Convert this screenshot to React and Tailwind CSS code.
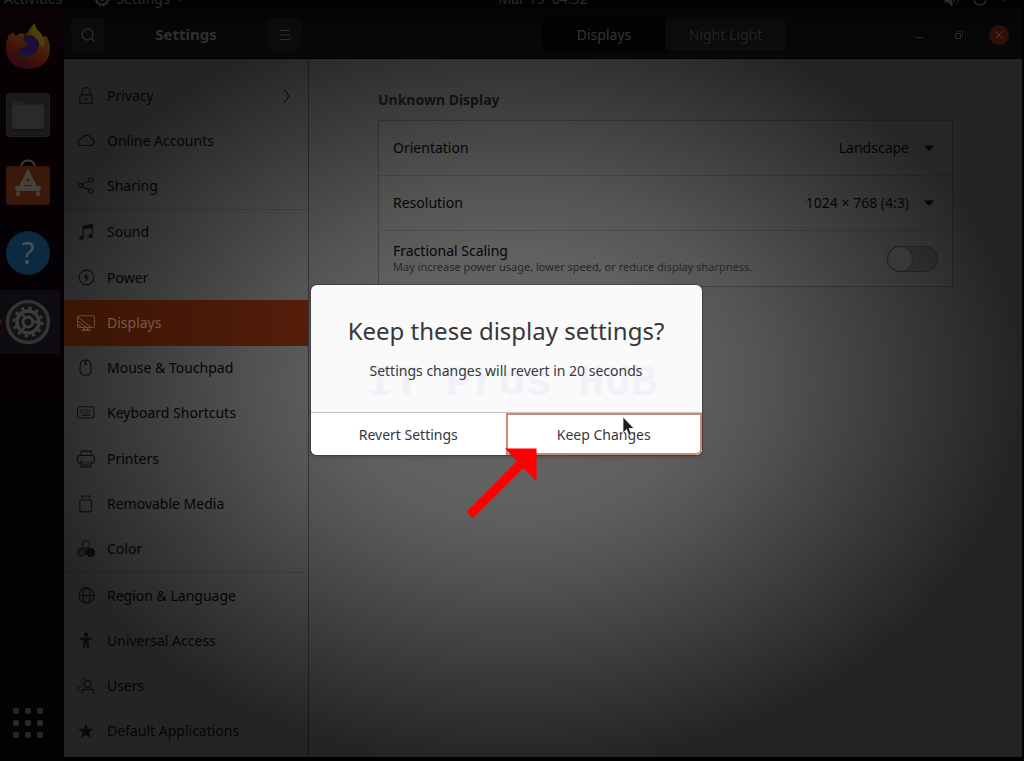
import React from "react";

const line = {
  width: 18,
  height: 18,
  viewBox: "0 0 16 16",
  fill: "none",
  stroke: "currentColor",
  strokeWidth: 0.9,
  "aria-hidden": true,
  className: "shrink-0 opacity-80",
};

const icons = {
  privacy: (
    <svg {...line}>
      <rect x="2.5" y="7" width="11" height="7.5" rx="0.5" />
      <path d="M4.5 7V4a3.5 3.5 0 0 1 7 0v3" />
      <circle cx="8" cy="10.800" r="1.1" fill="currentColor" stroke="none" />
    </svg>
  ),
  cloud: (
    <svg {...line}>
      <path d="M3.6 12h8.9a3 3 0 0 0 .4-5.9A4.6 4.6 0 0 0 4.4 5.500a3.3 3.3 0 0 0-.8 6.5z" />
    </svg>
  ),
  share: (
    <svg {...line}>
      <circle cx="3" cy="7.500" r="1.9" />
      <circle cx="12.3" cy="2.900" r="2" />
      <circle cx="12.3" cy="12.200" r="2" />
      <path d="M4.7 6.700l5.800-2.900M4.700 8.400l5.800 2.900" />
    </svg>
  ),
  sound: (
    <svg {...line}>
      <path d="M5.5 13V3l8-1.5v10" />
      <path d="M5.5 3l8-1.5v2.2l-8 1.5z" fill="currentColor" />
      <ellipse cx="3.9" cy="13.2" rx="2" ry="1.7" fill="currentColor" stroke="none" />
      <ellipse cx="11.9" cy="11.8" rx="2" ry="1.7" fill="currentColor" stroke="none" />
    </svg>
  ),
  power: (
    <svg {...line}>
      <circle cx="8.5" cy="7.500" r="6.5" />
      <path d="M9 3.2L6 8.1h2.1l-.4 3.8 3-5H8.7z" fill="currentColor" stroke="none" />
    </svg>
  ),
  displays: (
    <svg {...line}>
      <rect x="0.5" y="1.500" width="15" height="10.500" rx="1.4" />
      <path d="M1 3l11 8.500M1 6.500l7 5M1 9.500l3 2" />
      <path d="M6.5 12v2M9.5 12v2M4 14.5h8" strokeWidth="1.4" />
    </svg>
  ),
  mouse: (
    <svg {...line}>
      <path d="M2.9 5Q3 1 7.5 1T12.3 5l.3 5Q12.4 14.500 7.6 14.500T2.6 10z" />
      <path d="M7.6 1.500v4" strokeWidth="1.6" />
    </svg>
  ),
  keyboard: (
    <svg {...line}>
      <rect x="0.5" y="2.500" width="14.5" height="10" rx="1.4" />
      <path d="M3 5.500h9.6M3 7.700h9.6" strokeDasharray="1.6 .9" />
      <path d="M4 10h7.6" />
    </svg>
  ),
  printer: (
    <svg {...line}>
      <path d="M3.5 4.5v-3.500h9v3.500M3.5 11.5H2Q.5 11.5.5 10V7Q.5 4.8 2.6 4.8h10.8Q15.5 4.8 15.5 7v3q0 1.500-1.500 1.500h-1.500" />
      <path d="M3.500 9.500v5.500h9V9.500M5.500 10.500v1.500M8 10.500v1.500M10.500 10.500v1.500M5 13.300h6" />
    </svg>
  ),
  media: (
    <svg {...line}>
      <rect x="2.500" y="4.500" width="10.500" height="10.500" rx="2" />
      <path d="M4.500 3V.8h6.500V3" />
    </svg>
  ),
  color: (
    <svg {...line}>
      <circle cx="8" cy="4" r="3.300" />
      <circle cx="4" cy="11" r="3.500" fill="currentColor" fillOpacity="0.35" />
      <circle cx="12" cy="11" r="3.700" fill="currentColor" />
    </svg>
  ),
  globe: (
    <svg {...line}>
      <circle cx="8.500" cy="7.500" r="6.800" />
      <ellipse cx="8.500" cy="7.500" rx="3.300" ry="6.800" />
      <path d="M1.700 7.500h13.600" />
    </svg>
  ),
  access: (
    <svg {...line}>
      <circle cx="8" cy="2.500" r="2" fill="currentColor" stroke="none" />
      <path
        d="M2.500 5h11v1.500L10 7l.7 7.500H9L8.400 10h-.8L7 14.500H5.300L6 7l-3.500-.500z"
        fill="currentColor"
        stroke="none"
      />
    </svg>
  ),
  users: (
    <svg {...line}>
      <circle cx="9.500" cy="6" r="3" />
      <path d="M4 14.500q.300-3.500 3-3.500h5q2.700 0 3 3.500" />
      <path d="M7.500 1.200Q4.200.800 4 4q0 1.700 1 2.800M.5 12q.3-3 3-3.500" strokeDasharray="1.500 .8" />
    </svg>
  ),
  star: (
    <svg {...line}>
      <path d="M8 1l1.800 5h5.200l-4.200 3.200 1.600 5.300L8 11.300l-4.400 3.200 1.600-5.300L1 6h5.200z" fill="currentColor" stroke="none" />
    </svg>
  ),
};

const groups = [
  [
    ["Privacy", "privacy"],
    ["Online Accounts", "cloud"],
    ["Sharing", "share"],
  ],
  [
    ["Sound", "sound"],
    ["Power", "power"],
    ["Displays", "displays"],
    ["Mouse & Touchpad", "mouse"],
    ["Keyboard Shortcuts", "keyboard"],
    ["Printers", "printer"],
    ["Removable Media", "media"],
    ["Color", "color"],
  ],
  [
    ["Region & Language", "globe"],
    ["Universal Access", "access"],
    ["Users", "users"],
    ["Default Applications", "star"],
  ],
];

function TopBar() {
  return (
    <div className="relative flex h-[9px] shrink-0 items-end justify-between overflow-hidden bg-[#020202] text-sm leading-5 text-[#2b2b2b]">
      <div className="flex items-end gap-8 pl-1">
        <span>Activities</span>
        <span className="flex items-center gap-1.5">
          <svg width="16" height="16" viewBox="0 0 16 16" fill="none" stroke="currentColor" aria-hidden="true">
            <circle cx="8" cy="8" r="5.500" strokeWidth="2" />
            <circle cx="8" cy="8" r="7" strokeWidth="1.500" strokeDasharray="2 2" />
            <circle cx="8" cy="8" r="2" />
          </svg>
          Settings <span className="text-[8px]">▼</span>
        </span>
      </div>
      <span className="absolute inset-x-0 bottom-0 pl-[62px] text-center">Mar 15&nbsp; 04:52</span>
      <div className="flex items-center gap-3 pr-4">
        <svg width="16" height="16" viewBox="0 0 16 16" fill="none" stroke="currentColor" aria-hidden="true">
          <path d="M1 5h3l4-4v14l-4-4H1z" fill="currentColor" />
          <path d="M10 5q2 3 0 6M12.500 3q3.500 5 0 10" />
        </svg>
        <svg width="16" height="16" viewBox="0 0 16 16" fill="none" stroke="currentColor" strokeWidth="1.500" aria-hidden="true">
          <circle cx="8" cy="8" r="6" />
          <path d="M8 0v6" />
        </svg>
        <span className="text-[8px]">▼</span>
      </div>
    </div>
  );
}

function Firefox() {
  return (
    <svg width="46" height="48" viewBox="0 0 46 48" className="opacity-75" aria-hidden="true">
      <defs>
        <linearGradient id="fox" x1="0.75" y1="0" x2="0.3" y2="1">
          <stop offset="0" stopColor="#5f560f" />
          <stop offset="0.4" stopColor="#5e300a" />
          <stop offset="0.75" stopColor="#4e140f" />
          <stop offset="1" stopColor="#3d091d" />
        </linearGradient>
      </defs>
      <path
        d="M7 10q2 1 4 4 3-3 6-3l3 2q3-2 4-5 2-4 6-7 0 5 4 8 3 3 4 6l3-1q4 6 4 12 0 20-22 21Q2 46 1 27 1 19 3 16l1-4 2 1z"
        fill="url(#fox)"
      />
      <path d="M19 14q5-2 9 0l5 4q2 4 0 9-3 7-10 7-8 0-9-8 2 1 4 0l6-4-5-2q-1-3 0-6z" fill="#261346" />
      <path d="M14 26q5 6 12 2 3 4-1 7-8 2-12-4z" fill="#1a1d55" opacity="0.6" />
      <path d="M30 2q-5 5-3 11 6 3 8 10 4 4 5-2-1-7-6-11-4-3-4-8z" fill="#665d12" opacity="0.8" />
    </svg>
  );
}

function Dock() {
  const item = "flex h-[64px] w-[60px] items-center justify-center rounded-r pr-1";
  return (
    <nav aria-label="Dock" className="flex w-[64px] shrink-0 flex-col justify-between bg-linear-to-b from-[#090103] via-[#050105] to-[#020104]">
      <div className="flex flex-col gap-[5px] pt-[5px]">
        <button aria-label="Firefox" className={item}>
          <Firefox />
        </button>
        <button aria-label="Files" className={item}>
          <svg width="44" height="44" viewBox="0 0 44 44" aria-hidden="true">
            <rect width="44" height="44" rx="4" fill="#1b1a1a" />
            <rect x="0.500" y="0.500" width="43" height="43" rx="4" fill="none" stroke="#232222" />
            <path d="M6 11q0-3 3-3h8q2 0 3 3h15q3 0 3 3v4H6z" fill="#232321" />
            <rect x="6" y="12" width="32" height="24" rx="3" fill="#2a2a28" />
            <path d="M7 37h30" stroke="#101010" />
          </svg>
        </button>
        <button aria-label="Ubuntu Software" className={item}>
          <svg width="44" height="46" viewBox="0 0 44 46" className="mb-1" aria-hidden="true">
            <path d="M15 9Q15 1.500 22 1.500T29 9" fill="none" stroke="#3b3835" strokeWidth="2" />
            <rect y="7" width="44" height="39" rx="4" fill="#38190b" />
            <path d="M14 30l8-16 8 16M15 24h14" fill="none" stroke="#47413c" strokeWidth="4" />
            <rect x="9" y="27" width="26" height="5" rx="2" fill="#47413c" />
            <path d="M13 33l-2 4M31 33l2 4" stroke="#47413c" strokeWidth="4" />
          </svg>
        </button>
        <button aria-label="Help" className={item}>
          <span className="flex h-[44px] w-[44px] items-center justify-center rounded-full bg-[#0b2a3f] font-['Noto_Sans',sans-serif] text-[30px] leading-none text-[#43525a]">
            ?
          </span>
        </button>
        <button aria-label="Settings" className={item + " relative bg-[#0e0c11]"}>
          <span className="absolute top-[29px] left-0 h-1.5 w-[2px] rounded-r-full bg-[#3d1206]" />
          <svg width="46" height="46" viewBox="0 0 46 46" fill="none" aria-hidden="true">
            <circle cx="23" cy="23" r="20.500" fill="#131313" stroke="#333333" strokeWidth="3.500" />
            <circle cx="23" cy="23" r="14" stroke="#3b3b3b" strokeWidth="3" strokeDasharray="3.330 4" />
            <circle cx="23" cy="23" r="11" stroke="#3b3b3b" strokeWidth="3.500" />
            <circle cx="23" cy="23" r="5" stroke="#3b3b3b" strokeWidth="3" />
            <path d="M26 23h9M21 20l-5-7M21 26l-5 7" stroke="#3b3b3b" strokeWidth="2.500" />
          </svg>
        </button>
      </div>
      <button aria-label="Show Applications" className="flex w-[56px] justify-center pb-[23px]">
        <span className="grid grid-cols-3 gap-1.5">
          {Array.from({ length: 9 }, (_, i) => (
            <span key={i} className="h-1.5 w-1.5 rounded-xs bg-[#272727]" />
          ))}
        </span>
      </button>
    </nav>
  );
}

function HeaderBar() {
  return (
    <header className="flex h-[50px] shrink-0 border-b border-black bg-linear-to-b from-[#050505] to-[#080808] pt-[2px] text-[#2f2f2f]">
      <div className="flex w-[244px] shrink-0 items-center justify-between px-[7px]">
        <button aria-label="Search" className="flex h-[33px] w-[33px] items-center justify-center rounded bg-[#0b0b0b]">
          <svg width="16" height="16" viewBox="0 0 16 16" fill="none" stroke="currentColor" strokeWidth="1.300" aria-hidden="true">
            <circle cx="7.500" cy="7.500" r="5.500" />
            <path d="M11.500 11.500l3 3" />
          </svg>
        </button>
        <h1 className="text-[15px] font-bold">Settings</h1>
        <button aria-label="Menu" className="flex h-[33px] w-[33px] items-center justify-center rounded bg-[#0b0b0b]">
          <svg width="12" height="12" viewBox="0 0 12 12" stroke="currentColor" strokeWidth="1.200" aria-hidden="true">
            <path d="M1 1.500h10M1 6h10M1 10.500h10" />
          </svg>
        </button>
      </div>
      <div className="grid flex-1 grid-cols-[1fr_auto_1fr] items-center">
        <div className="col-start-2 flex text-[14px] leading-5">
          <button className="h-[34px] w-[122px] rounded-l border border-black bg-[#030303] text-[#343434]">Displays</button>
          <button className="h-[34px] w-[122px] rounded-r border border-l-0 border-[#040404] bg-[#0b0b0b] text-[#242424]">Night Light</button>
        </div>
        <div className="flex items-center justify-end gap-[20px] pr-[13px] text-[#282828]">
          <button aria-label="Minimize" className="flex h-5 w-5 items-center justify-center">
            <svg width="10" height="10" viewBox="0 0 10 10" stroke="currentColor" aria-hidden="true">
              <path d="M1 7.500h8" />
            </svg>
          </button>
          <button aria-label="Restore" className="flex h-5 w-5 items-center justify-center">
            <svg width="10" height="10" viewBox="0 0 10 10" fill="none" stroke="currentColor" aria-hidden="true">
              <rect x="1.500" y="3.500" width="5" height="5" />
              <path d="M3 1.500h5.500V7" strokeOpacity="0.6" />
            </svg>
          </button>
          <button aria-label="Close" className="flex h-5 w-5 items-center justify-center rounded-full bg-[#2e1006] text-[#4c3d35]">
            <svg width="10" height="10" viewBox="0 0 10 10" stroke="currentColor" aria-hidden="true">
              <path d="M1.500 1.500l7 7M8.500 1.500l-7 7" />
            </svg>
          </button>
        </div>
      </div>
    </header>
  );
}

function Sidebar() {
  return (
    <nav aria-label="Settings panels" className="flex w-[245px] shrink-0 flex-col border-r border-black/40 pt-[14px] pb-[3px]">
      {groups.map((group, g) => (
        <React.Fragment key={g}>
          {g > 0 && <hr className="h-px border-0 bg-black/15" />}
          {group.map(([label, icon]) => {
            const active = label === "Displays";
            return (
              <a
                key={label}
                href="#"
                aria-current={active ? "page" : undefined}
                className={
                  "flex flex-1 items-center gap-[12px] pr-[17px] pl-[13px] text-[14px] leading-5 " +
                  (active ? "bg-linear-to-r from-[#3a1405] to-[#551d0a] text-[#75594d]" : "text-[#040404]")
                }
              >
                {icons[icon]}
                <span className="flex-1">{label}</span>
                {label === "Privacy" && (
                  <svg width="8" height="16" viewBox="0 0 8 16" fill="none" stroke="currentColor" strokeWidth="1" aria-hidden="true">
                    <path d="M1 1l5 7-5 7" />
                  </svg>
                )}
              </a>
            );
          })}
        </React.Fragment>
      ))}
    </nav>
  );
}

function SelectRow({ id, label, value }) {
  return (
    <div className="flex h-[55px] items-center justify-between border-b border-black/15 px-[14px]">
      <label htmlFor={id}>{label}</label>
      <div className="flex items-center gap-[15px] pr-[4px]">
        <select id={id} className="appearance-none bg-transparent text-right outline-none">
          <option>{value}</option>
        </select>
        <svg width="10" height="6" viewBox="0 0 10 6" fill="currentColor" aria-hidden="true">
          <path d="M0 0.500h10L5 6z" />
        </svg>
      </div>
    </div>
  );
}

function DisplayPanel() {
  return (
    <main className="flex-1 px-[69px] pt-[31px]">
      <h2 className="text-[14px] leading-5 font-bold text-[#111111]">Unknown Display</h2>
      <section className="mt-[10px] border border-black/25 bg-white/[0.01] text-[14px] leading-5 text-[#050505]">
        <SelectRow id="orientation" label="Orientation" value="Landscape" />
        <SelectRow id="resolution" label="Resolution" value="1024 × 768 (4:3)" />
        <div className="flex h-[55px] items-center justify-between px-[14px]">
          <label htmlFor="fractional">
            <span className="block leading-4">Fractional Scaling</span>
            <span className="block text-[11px] leading-4 text-[#262626]">
              May increase power usage, lower speed, or reduce display sharpness.
            </span>
          </label>
          <input
            id="fractional"
            type="checkbox"
            role="switch"
            className="h-[26px] w-[51px] appearance-none rounded-full border border-black/25 bg-black/15 before:block before:h-6 before:w-6 before:rounded-full before:bg-[#383838] before:ring-1 before:ring-black/20 checked:before:ml-[25px]"
          />
        </div>
      </section>
    </main>
  );
}

function ConfirmDialog() {
  return (
    <div className="absolute inset-0 flex items-center justify-center pr-3 pb-[21px]">
      <div role="dialog" aria-labelledby="dialog-title" className="relative w-[391px] rounded-md bg-[#fafafa] text-[#36373a] shadow-[0_0_0_1px_rgba(0,0,0,0.2),0_2px_5px_rgba(0,0,0,0.2)]">
        <div className="relative flex h-[127px] flex-col items-center pt-[30px]">
          <span className="absolute inset-x-0 top-[76px] pl-3 text-center font-['Liberation_Mono',monospace] text-[44px] leading-[44px] font-bold whitespace-pre text-[#f1f1f9]">
            IT Pros HUB
          </span>
          <h2 id="dialog-title" className="relative text-[24px] leading-8">
            Keep these display settings?
          </h2>
          <p className="relative mt-[14px] text-[14px] leading-5">Settings changes will revert in 20 seconds</p>
        </div>
        <div className="grid h-[43px] grid-cols-2 overflow-hidden rounded-b-md border-t border-[#c4c4c4] bg-white text-[14px]">
          <button>Revert Settings</button>
          <button className="rounded-br-md border-2 border-[#c88d76]">Keep Changes</button>
        </div>
        <svg className="pointer-events-none absolute top-[163px] left-[193px]" width="34" height="72" viewBox="0 0 34 72" overflow="visible" aria-hidden="true">
          <path d="M1 0.500H32.500V33L19.500 20-31.500 70.500-37.500 64 13 13z" fill="#ff0000" />
        </svg>
        <svg className="pointer-events-none absolute top-[131px] left-[311px]" width="13" height="22" viewBox="0 0 13 22" aria-hidden="true">
          <path d="M1 1v16l3.500-3.500L7 19.500l2.500-1L7 12.500h5z" fill="#1d1d1f" stroke="#f2f2f2" strokeWidth="0.800" />
        </svg>
      </div>
    </div>
  );
}

export default function App() {
  return (
    <div className="relative flex h-screen min-h-[640px] flex-col overflow-hidden bg-black font-['Noto_Sans','Open_Sans',sans-serif]">
      <TopBar />
      <div className="flex min-h-0 flex-1">
        <Dock />
        <div className="flex min-w-0 flex-1 flex-col pr-[2px] pb-1">
          <HeaderBar />
          <div className="flex min-h-0 flex-1 bg-[radial-gradient(ellipse_53%_55%_at_47%_46.500%,#686868_0%,#5f5f5f_35%,#535353_50%,#3b3b3b_75%,#242424_100%)]">
            <Sidebar />
            <DisplayPanel />
          </div>
        </div>
      </div>
      <ConfirmDialog />
    </div>
  );
}
